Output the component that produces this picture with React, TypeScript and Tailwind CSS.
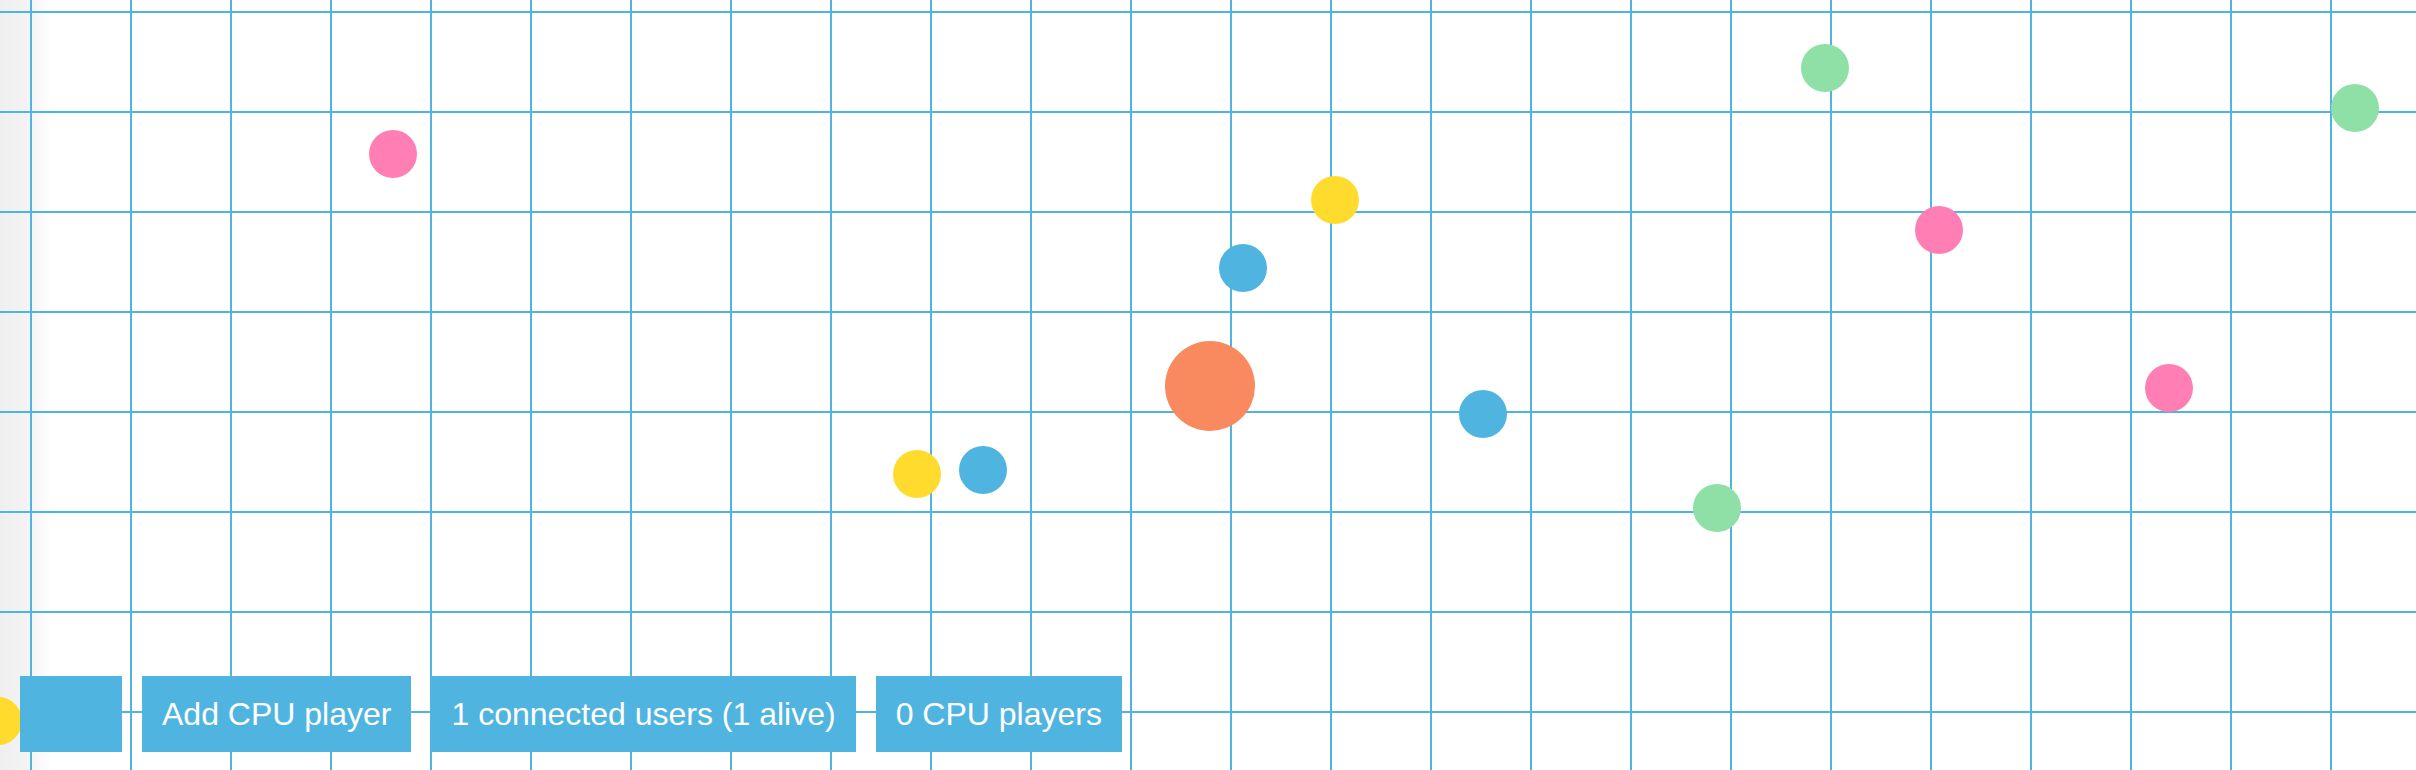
import React from "react";

type Dot = { x: number; y: number; r: number; c: string };

const dots: Dot[] = [
  { x: 393, y: 154, r: 24, c: "#ff7eb4" },
  { x: 1825, y: 68, r: 24, c: "#8ee0a6" },
  { x: 2355, y: 108, r: 24, c: "#8ee0a6" },
  { x: 1335, y: 200, r: 24, c: "#ffdb2e" },
  { x: 1939, y: 230, r: 24, c: "#ff7eb4" },
  { x: 1243, y: 268, r: 24, c: "#50b4e0" },
  { x: 1210, y: 386, r: 45, c: "#f98a5f" },
  { x: 1483, y: 414, r: 24, c: "#50b4e0" },
  { x: 2169, y: 388, r: 24, c: "#ff7eb4" },
  { x: 917, y: 474, r: 24, c: "#ffdb2e" },
  { x: 983, y: 470, r: 24, c: "#50b4e0" },
  { x: 1717, y: 508, r: 24, c: "#8ee0a6" },
  { x: -2, y: 721, r: 24, c: "#ffdb2e" },
];

export default function App() {
  return (
    <div className="relative h-[770px] w-full overflow-hidden bg-[linear-gradient(to_right,#efefef_0px,#f4f4f4_30px,#ffffff_52px)] font-['Liberation_Sans',Arial,sans-serif]">
      <div className="absolute inset-0 bg-[linear-gradient(to_right,#50b4e0_2px,transparent_2px),linear-gradient(to_bottom,#50b4e0_2px,transparent_2px)] [background-size:100px_100px] [background-position:30px_11px]" />
      {dots.map((d, i) => (
        <div
          key={i}
          className="absolute rounded-full"
          style={{
            left: d.x - d.r,
            top: d.y - d.r,
            width: d.r * 2,
            height: d.r * 2,
            backgroundColor: d.c,
          }}
        />
      ))}
      <div className="absolute left-[-14px] top-[752px] h-[40px] w-[30px] rounded-full border-l-[3px] border-[#222]" />
      <div className="absolute bottom-[18px] left-[20px] flex gap-5">
        <div className="h-[76px] w-[102px] bg-[#50b4e0]" />
        <div className="flex h-[76px] items-center bg-[#50b4e0] px-5 text-[32px] leading-[37px] text-white">
          Add CPU player
        </div>
        <div className="flex h-[76px] items-center bg-[#50b4e0] px-5 text-[32px] leading-[37px] text-white">
          1 connected users (1 alive)
        </div>
        <div className="flex h-[76px] items-center bg-[#50b4e0] px-5 text-[32px] leading-[37px] text-white">
          0 CPU players
        </div>
      </div>
    </div>
  );
}
